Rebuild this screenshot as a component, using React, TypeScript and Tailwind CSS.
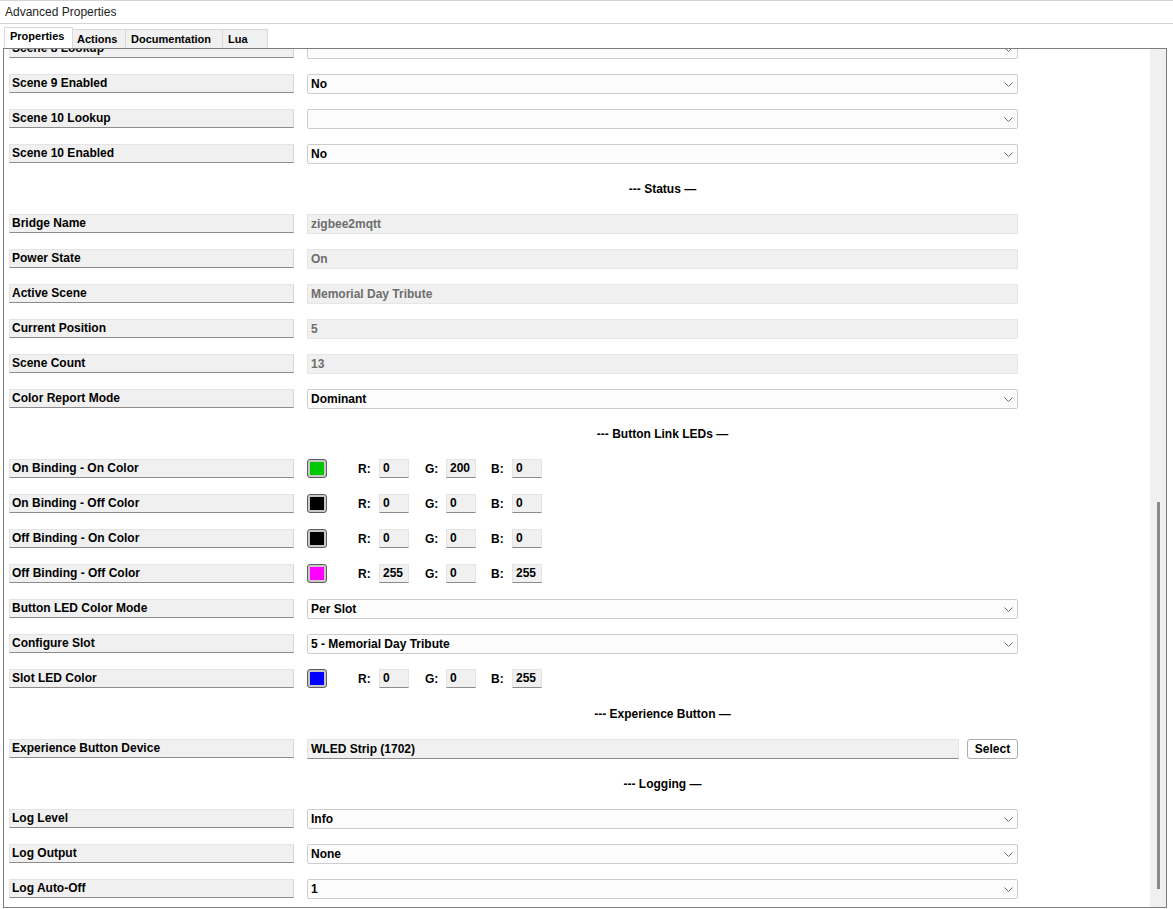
import React from "react";

type Row =
  | { kind: "select"; label: string; value: string }
  | { kind: "readonly"; label: string; value: string }
  | { kind: "header"; text: string }
  | { kind: "color"; label: string; swatch: string; r: number; g: number; b: number }
  | { kind: "device"; label: string; value: string };

const ROWS: Row[] = [
  { kind: "select", label: "Scene 8 Lookup", value: "" },
  { kind: "select", label: "Scene 9 Enabled", value: "No" },
  { kind: "select", label: "Scene 10 Lookup", value: "" },
  { kind: "select", label: "Scene 10 Enabled", value: "No" },
  { kind: "header", text: "--- Status \u2014" },
  { kind: "readonly", label: "Bridge Name", value: "zigbee2mqtt" },
  { kind: "readonly", label: "Power State", value: "On" },
  { kind: "readonly", label: "Active Scene", value: "Memorial Day Tribute" },
  { kind: "readonly", label: "Current Position", value: "5" },
  { kind: "readonly", label: "Scene Count", value: "13" },
  { kind: "select", label: "Color Report Mode", value: "Dominant" },
  { kind: "header", text: "--- Button Link LEDs \u2014" },
  { kind: "color", label: "On Binding - On Color", swatch: "#00c800", r: 0, g: 200, b: 0 },
  { kind: "color", label: "On Binding - Off Color", swatch: "#000000", r: 0, g: 0, b: 0 },
  { kind: "color", label: "Off Binding - On Color", swatch: "#000000", r: 0, g: 0, b: 0 },
  { kind: "color", label: "Off Binding - Off Color", swatch: "#ff00ff", r: 255, g: 0, b: 255 },
  { kind: "select", label: "Button LED Color Mode", value: "Per Slot" },
  { kind: "select", label: "Configure Slot", value: "5 - Memorial Day Tribute" },
  { kind: "color", label: "Slot LED Color", swatch: "#0000ff", r: 0, g: 0, b: 255 },
  { kind: "header", text: "--- Experience Button \u2014" },
  { kind: "device", label: "Experience Button Device", value: "WLED Strip (1702)" },
  { kind: "header", text: "--- Logging \u2014" },
  { kind: "select", label: "Log Level", value: "Info" },
  { kind: "select", label: "Log Output", value: "None" },
  { kind: "select", label: "Log Auto-Off", value: "1" },
];

const Label = ({ text }: { text: string }) => (
  <div className="w-[285px] h-[19px] shrink-0 bg-[#f0f0f0] border border-[#e4e4e4] border-r-[#d6d6d6] border-b-[#8c8c8c] pl-[2px] text-[12px] font-bold leading-[17px] text-black whitespace-nowrap">
    {text}
  </div>
);

const Chevron = () => (
  <svg width="9" height="6" viewBox="0 0 9 6" className="absolute right-[4px] top-[7px]">
    <path d="M0.5 0.5 L4.5 4.5 L8.5 0.5" fill="none" stroke="#6b6b6b" strokeWidth="1" />
  </svg>
);

const NumBox = ({ v }: { v: number }) => (
  <div className="w-[30px] h-[19px] bg-[#f0f0f0] border border-[#e4e4e4] border-b-[#8c8c8c] pl-[3px] text-[12px] font-bold leading-[17px] text-black">
    {v}
  </div>
);

const Value = ({ row }: { row: Row }) => {
  if (row.kind === "select") {
    return (
      <div className="relative w-[711px] h-[20px] bg-[#fcfcfc] border border-[#cdcdcd] rounded-[2px] pl-[3px] text-[12px] font-bold leading-[18px] text-black">
        {row.value}
        <Chevron />
      </div>
    );
  }
  if (row.kind === "readonly") {
    return (
      <div className="w-[711px] h-[20px] bg-[#f0f0f0] border border-[#e6e6e6] pl-[3px] text-[12px] font-bold leading-[18px] text-[#6d6d6d]">
        {row.value}
      </div>
    );
  }
  if (row.kind === "color") {
    return (
      <div className="flex items-center text-[12px] font-bold text-black">
        <div className="w-[20px] h-[19px] rounded-[3px] border border-[#5e5e5e] bg-[#c8c8c8] p-[2px]">
          <div className="w-full h-full" style={{ backgroundColor: row.swatch }} />
        </div>
        <span className="ml-[31px] w-[21px]">R:</span>
        <NumBox v={row.r} />
        <span className="ml-[16px] w-[21px]">G:</span>
        <NumBox v={row.g} />
        <span className="ml-[15px] w-[21px]">B:</span>
        <NumBox v={row.b} />
      </div>
    );
  }
  if (row.kind === "device") {
    return (
      <div className="flex items-center w-[711px]">
        <div className="w-[652px] h-[20px] bg-[#f0f0f0] border border-[#e4e4e4] border-b-[#8c8c8c] pl-[3px] text-[12px] font-bold leading-[18px] text-black">
          {row.value}
        </div>
        <div className="ml-[8px] w-[51px] h-[20px] bg-[#fdfdfd] border border-[#adadad] rounded-[3px] text-center text-[12px] font-bold leading-[18px] text-black">
          Select
        </div>
      </div>
    );
  }
  return null;
};

export default function App() {
  return (
    <div className="w-[1173px] h-[909px] bg-white overflow-hidden font-['Liberation_Sans',Arial,sans-serif] text-black">
      {/* title bar */}
      <div className="h-[24px] border-t border-b border-[#d4d4d4] pl-[5px] text-[12px] leading-[22px] text-[#1e1e1e]">
        Advanced Properties
      </div>

      {/* tabs */}
      <div className="h-[24px] flex items-end pl-[4px] text-[11px] font-bold">
        <div className="w-[69px] h-[21px] bg-white border border-b-0 border-[#d9d9d9] pl-[5px] leading-[17px]">Properties</div>
        <div className="w-[53px] h-[19px] bg-[#f0f0f0] border border-l-0 border-b-0 border-[#d9d9d9] pl-[4px] leading-[19px]">Actions</div>
        <div className="w-[97px] h-[19px] bg-[#f0f0f0] border border-l-0 border-b-0 border-[#d9d9d9] pl-[5px] leading-[19px]">Documentation</div>
        <div className="w-[45px] h-[19px] bg-[#f0f0f0] border border-l-0 border-b-0 border-[#d9d9d9] pl-[5px] leading-[19px]">Lua</div>
      </div>

      {/* panel */}
      <div className="ml-[3px] w-[1164px] h-[860px] border border-[#7d7d7d] flex">
        <div className="flex-1 overflow-hidden">
          <div className="mt-[-18px]">
            {ROWS.map((row, i) => (
              <div key={i} className="h-[35px] flex items-center pl-[5px]">
                {row.kind === "header" ? (
                  <>
                    <div className="w-[285px] shrink-0" />
                    <div className="ml-[13px] w-[711px] text-center text-[12px] font-bold">{row.text}</div>
                  </>
                ) : (
                  <>
                    <Label text={row.label} />
                    <div className="ml-[13px]">
                      <Value row={row} />
                    </div>
                  </>
                )}
              </div>
            ))}
          </div>
        </div>
        {/* scrollbar */}
        <div className="w-[16px] shrink-0 bg-[#f0f0f0] relative">
          <div className="absolute left-[7px] top-[453px] w-[3px] h-[387px] bg-[#8a8a8a]" />
        </div>
      </div>
    </div>
  );
}
